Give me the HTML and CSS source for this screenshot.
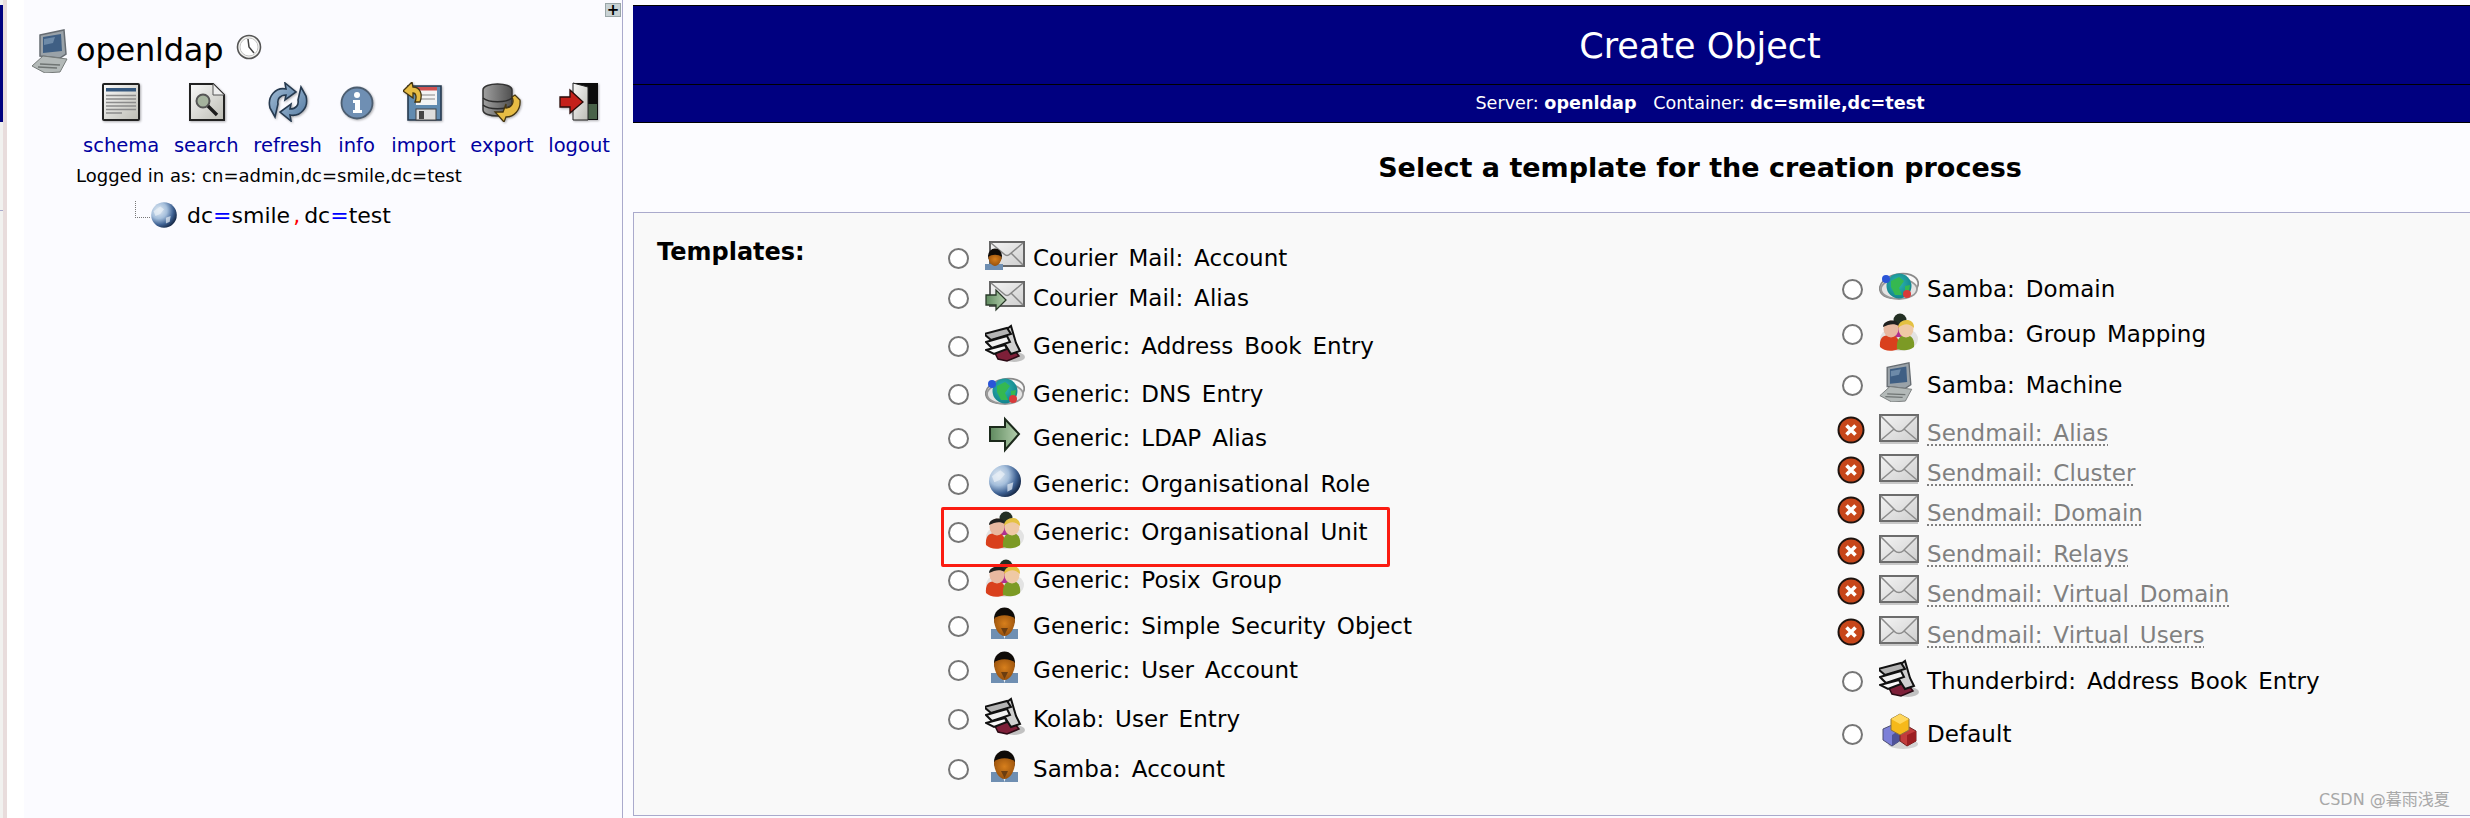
FILE: index.html
```html
<!DOCTYPE html>
<html lang="en">
<head>
<meta charset="utf-8">
<title>Create Object</title>
<link rel="stylesheet" href="styles.css">
</head>
<body>
<svg class="defs" width="0" height="0" aria-hidden="true">
  <defs>
    <radialGradient id="gGlobe" cx="30%" cy="32%" r="80%"><stop offset="0" stop-color="#e4ecf4"/><stop offset=".4" stop-color="#a4bedb"/><stop offset=".7" stop-color="#3f6294"/><stop offset="1" stop-color="#0c1a34"/></radialGradient>
    <radialGradient id="gEarth" cx="45%" cy="40%" r="65%"><stop offset="0" stop-color="#2fb8b0"/><stop offset="1" stop-color="#0f7f8a"/></radialGradient>
    <radialGradient id="gFace" cx="50%" cy="40%" r="60%"><stop offset="0" stop-color="#d77f1c"/><stop offset="1" stop-color="#97500c"/></radialGradient>
    <linearGradient id="gGrey" x1="0" y1="0" x2="1" y2="1"><stop offset="0" stop-color="#fafafa"/><stop offset="1" stop-color="#bcbcb4"/></linearGradient>
    <linearGradient id="gBlue" x1="0" y1="0" x2="1" y2="1"><stop offset="0" stop-color="#a8c2da"/><stop offset="1" stop-color="#4f769e"/></linearGradient>
    <linearGradient id="gDb" x1="0" y1="0" x2="1" y2="0"><stop offset="0" stop-color="#a0a0a0"/><stop offset="1" stop-color="#505050"/></linearGradient>
    <linearGradient id="gGreen" x1="0" y1="0" x2="1" y2="0"><stop offset="0" stop-color="#5f8a5f"/><stop offset="1" stop-color="#b5d0ae"/></linearGradient>
    <linearGradient id="gMail" x1="0" y1="0" x2="1" y2="1"><stop offset="0" stop-color="#f4f4f4"/><stop offset="1" stop-color="#cfcfcf"/></linearGradient>

    <symbol id="i-computer" viewBox="0 0 38 44" preserveAspectRatio="xMinYMid">
      <path d="M9 6 33 1 35 25 29 29 9 27Z" fill="#9aa2a8" stroke="#666c72" stroke-width="1.500"/>
      <path d="M12 8 30 5 31 22 12 24Z" fill="#3f5f84"/>
      <path d="M13 10 24 8 22 14 13 16Z" fill="#6d8aa8"/>
      <path d="M1 37 12 27 36 30 29 43 14 44Z" fill="#b3b9b8" stroke="#767b7a"/>
      <path d="M9 35 29 36M7 38 26 39" stroke="#6f7473" stroke-width="1.400"/>
    </symbol>

    <symbol id="i-clock" viewBox="0 0 26 28">
      <circle cx="13" cy="14" r="11.500" fill="#f3f3f0" stroke="#555" stroke-width="1.600"/>
      <circle cx="13" cy="14" r="9" fill="#fff" stroke="#c4c4c4"/>
      <path d="M12 6 13 14 18 20" fill="none" stroke="#444" stroke-width="1.500"/>
    </symbol>

    <symbol id="i-schema" viewBox="0 0 40 40">
      <rect x="2" y="2" width="36" height="36" rx="1" fill="url(#gGrey)" stroke="#222" stroke-width="2"/>
      <rect x="5" y="6" width="30" height="3.500" fill="#35587f"/>
      <path d="M5 13.500H35M5 17H35M5 20.500H35M5 24H35M5 27.500H35M5 31H21" stroke="#8b8b8b" stroke-width="1.700"/>
    </symbol>

    <symbol id="i-search" viewBox="0 0 40 40">
      <path d="M4 2H27L38 13V38H4Z" fill="url(#gGrey)" stroke="#222" stroke-width="2"/>
      <path d="M27 2V13H38" fill="#eee" stroke="#555"/>
      <circle cx="17" cy="19" r="6.500" fill="#a5b39e" stroke="#555" stroke-width="2"/>
      <path d="M22 24 31 33" stroke="#1c1c1c" stroke-width="3.400"/>
    </symbol>

    <symbol id="i-refresh" viewBox="0 0 40 40">
      <path d="M2 26C-1 14 8 5 18 7L17 1 28 10 17 18 18 13C12 13 9 17 10 22L7 35Z" fill="url(#gBlue)" stroke="#263a50" stroke-width="1.600"/>
      <path d="M38 14C41 26 32 35 22 33L23 39 12 30 23 22 22 27C28 27 31 23 30 18L33 5Z" fill="url(#gBlue)" stroke="#263a50" stroke-width="1.600"/>
    </symbol>

    <symbol id="i-info" viewBox="0 0 40 40">
      <circle cx="20" cy="21" r="15.500" fill="#6f8fb3" stroke="#4c5d70" stroke-width="1.800"/>
      <circle cx="20" cy="13" r="3" fill="#fff"/>
      <path d="M16 18H23V28H25V31H16V28H18V21H16Z" fill="#fff"/>
    </symbol>

    <symbol id="i-import" viewBox="0 0 40 40">
      <path d="M5 4H38V38H5Z" fill="#618bb0" stroke="#263a50" stroke-width="1.600"/>
      <rect x="13" y="5" width="21" height="18" fill="#f4f4f4"/>
      <rect x="13" y="5" width="21" height="3.500" fill="#cf5050"/>
      <path d="M15 13H32M15 17H32" stroke="#aaa" stroke-width="1.500"/>
      <rect x="13" y="27" width="20" height="11" fill="#ddd" stroke="#444"/>
      <rect x="16" y="29" width="5" height="8" fill="#444"/>
      <path d="M0 9 9 0 10 5C17 5 20 12 17 20L12 20C14 15 13 11 10 11L10 16Z" fill="#e7bc44" stroke="#453612" stroke-width="1.300"/>
    </symbol>

    <symbol id="i-export" viewBox="0 0 40 40">
      <path d="M1 8C1 0 30 0 30 8V28C30 36 1 36 1 28Z" fill="url(#gDb)" stroke="#333" stroke-width="1.500"/>
      <path d="M1 16C7 21 24 21 30 16M1 23C7 28 24 28 30 23" fill="none" stroke="#2c2c2c" stroke-width="1.500"/>
      <path d="M21 30 13 30 22 40 24 35C32 35 39 28 38 18L33 13 30 15C33 21 29 26 24 26L24 22Z" fill="#e7bc44" stroke="#453612" stroke-width="1.300"/>
    </symbol>

    <symbol id="i-logout" viewBox="0 0 40 40">
      <rect x="14" y="1" width="25" height="37" fill="#0c0c0c"/>
      <rect x="29" y="22" width="9" height="15" fill="#496249"/>
      <path d="M14 1 29 5V38H14Z" fill="url(#gGrey)" stroke="#222"/>
      <path d="M1 15H11V8L24 20 11 31V25H1Z" fill="#c4201a" stroke="#2a0a08" stroke-width="1.300"/>
    </symbol>

    <symbol id="i-globe" viewBox="-1.875 -1.875 33.750 33.750">
      <circle cx="15" cy="15" r="13.500" fill="url(#gGlobe)"/>
      <path d="M4 11 11 6 15 9 11 14 6 16ZM17 18 22 16 21 22 17 24Z" fill="#e8eff6" opacity=".7"/>
    </symbol>

    <symbol id="i-person" viewBox="0 0 40 40">
      <rect x="6" y="26" width="27" height="10" fill="#6f8fb2"/>
      <path d="M17.500 29H21.500L19.500 36Z" fill="#e8eef4"/>
      <ellipse cx="19.500" cy="16" rx="10.500" ry="11.500" fill="#0f0b08"/>
      <path d="M9 16C13 11 26 11 30 16 30 25 25 33 19.500 33 14 33 9 25 9 16Z" fill="url(#gFace)"/>
      <path d="M16 25H23L19.500 32Z" fill="#6b3d10"/>
    </symbol>

    <symbol id="i-people" viewBox="0 0 40 40">
      <ellipse cx="20" cy="28" rx="19" ry="12" fill="#bbb" opacity=".35"/>
      <circle cx="21" cy="9" r="6.500" fill="#243024"/>
      <rect x="16" y="14" width="9" height="12" fill="#b03090"/>
      <path d="M1 36C0 26 5 24 11 24 17 24 21 27 20 38 12 41 5 40 1 36Z" fill="#d9401d"/>
      <path d="M18 38C17 27 22 24 27 24 33 24 36 29 35 36 30 40 24 40 18 38Z" fill="#7c9a25"/>
      <ellipse cx="12" cy="18" rx="7.500" ry="8.500" fill="#e8b8a0"/>
      <path d="M4 16C4 8 20 7 20 15 15 12 10 13 4 16Z" fill="#20201f"/>
      <ellipse cx="27" cy="18" rx="7.500" ry="8.500" fill="#efc9a5"/>
      <path d="M19 17C19 7 36 6 35 17 30 12 25 12 19 17Z" fill="#e4c142"/>
    </symbol>

    <symbol id="i-book" viewBox="2 0 40 40">
      <ellipse cx="31" cy="34" rx="11" ry="5" fill="#aaa" opacity=".7"/>
      <path d="M12 30 28 23 36 33 24 38 15 36Z" fill="#7d1f38" stroke="#2a0a14" stroke-width="1.500"/>
      <path d="M16 12 28 3 33 20 37 28 28 31Z" fill="#d0d0d0" stroke="#111" stroke-width="2"/>
      <path d="M1 11 24 5 28 11 8 17Z" fill="#b4b4b4" stroke="#111" stroke-width="2"/>
      <path d="M3 19 24 13 27 19 9 25Z" fill="#f1f1f1" stroke="#111" stroke-width="2"/>
      <path d="M3 27 22 22 24 26 11 31Z" fill="#fafafa" stroke="#111" stroke-width="2"/>
    </symbol>

    <symbol id="i-dns" viewBox="0 0 40 40">
      <ellipse cx="20" cy="20" rx="19.500" ry="12" transform="rotate(-12 20 20)" fill="none" stroke="#8a8a8a" stroke-width="1.800"/>
      <ellipse cx="20" cy="23" rx="18" ry="10" fill="#e4e4e4" stroke="#999" stroke-width="1.800"/>
      <circle cx="20" cy="20" r="12.500" fill="url(#gEarth)"/>
      <path d="M12 15 20 11 25 15 20 22 23 29 16 29 12 21ZM26 20 31 19 30 25 26 26Z" fill="#35b850"/>
      <circle cx="7" cy="13" r="4" fill="#2a55d8"/>
      <circle cx="28" cy="28" r="4" fill="#d83a3a"/>
    </symbol>

    <symbol id="i-arrow" viewBox="0 0 40 40">
      <path d="M5 12H20V4L34 19 20 35V26H5Z" fill="url(#gGreen)" stroke="#1c2a1c" stroke-width="2"/>
    </symbol>

    <symbol id="i-mail" viewBox="0 0 40 40">
      <rect x="1" y="5" width="38" height="26" fill="url(#gMail)" stroke="#6c6c6c" stroke-width="2"/>
      <path d="M2 6 16 20C18 22 22 22 24 20L38 6M2 30 15 19M38 30 25 19" fill="none" stroke="#8c8c8c" stroke-width="1.500"/>
      <rect x="1" y="32" width="38" height="2" fill="#c8c8c8"/>
    </symbol>

    <symbol id="i-mailuser" viewBox="0 0 40 40">
      <rect x="5" y="7" width="34" height="24" fill="url(#gMail)" stroke="#666" stroke-width="2"/>
      <path d="M6 8 19 19C21 21 23 21 25 19L38 8M38 30 26 18" fill="none" stroke="#888" stroke-width="1.500"/>
      <rect x="0" y="29" width="18" height="6" fill="#6f8fb2"/>
      <ellipse cx="10" cy="21" rx="7" ry="7.500" fill="#0f0b08"/>
      <path d="M3.500 22C6 19 14 19 16.500 22 16.500 27 13 31 10 31 7 31 3.500 27 3.500 22Z" fill="url(#gFace)"/>
    </symbol>

    <symbol id="i-mailalias" viewBox="0 0 40 40">
      <rect x="5" y="7" width="34" height="24" fill="url(#gMail)" stroke="#666" stroke-width="2"/>
      <path d="M6 8 19 19C21 21 23 21 25 19L38 8M38 30 26 18" fill="none" stroke="#888" stroke-width="1.500"/>
      <path d="M1 20H11V15L21 25 11 35V30H1Z" fill="url(#gGreen)" stroke="#2a3a2a" stroke-width="1.300"/>
    </symbol>

    <symbol id="i-x" viewBox="0 0 28 28">
      <circle cx="14" cy="14" r="12.500" fill="#c7461a" stroke="#1e1410" stroke-width="2"/>
      <path d="M9.500 9.500 18.500 18.500M18.500 9.500 9.500 18.500" stroke="#fff" stroke-width="3.600"/>
    </symbol>

    <symbol id="i-cube" viewBox="0 0 40 40">
      <ellipse cx="24" cy="33" rx="15" ry="5" fill="#bbb" opacity=".6"/>
      <path d="M4 18 13 14 22 18V29L13 35 4 29Z" fill="#7c80d8" stroke="#4c4e70"/>
      <path d="M13 24V35L22 29V18Z" fill="#4f5298"/>
      <path d="M21 20 30 16 37 20V30L28 35 21 30Z" fill="#c23c3c" stroke="#702222"/>
      <path d="M28 24V35L37 30V20Z" fill="#9c1f22"/>
      <path d="M12 8 21 3 30 8V19L21 24 12 19Z" fill="#f6b91a" stroke="#8c7440"/>
      <path d="M12 8 21 13 30 8 21 3Z" fill="#ffd75c"/>
    </symbol>
  </defs>
</svg>

<div class="edge">
  <div class="edge-bar"></div>
  <div class="edge-line"></div>
</div>
<div class="edge-pink"></div>

<aside class="side">
  <button class="expand" type="button">+</button>
  <div class="server">
    <svg class="ico server-ico"><use href="#i-computer"/></svg>
    <span class="server-name">openldap</span>
    <svg class="ico clock-ico"><use href="#i-clock"/></svg>
  </div>
  <nav class="tools">
    <a class="tool"><svg class="ico"><use href="#i-schema"/></svg><span>schema</span></a>
    <a class="tool"><svg class="ico"><use href="#i-search"/></svg><span>search</span></a>
    <a class="tool"><svg class="ico"><use href="#i-refresh"/></svg><span>refresh</span></a>
    <a class="tool"><svg class="ico"><use href="#i-info"/></svg><span>info</span></a>
    <a class="tool"><svg class="ico"><use href="#i-import"/></svg><span>import</span></a>
    <a class="tool"><svg class="ico"><use href="#i-export"/></svg><span>export</span></a>
    <a class="tool"><svg class="ico"><use href="#i-logout"/></svg><span>logout</span></a>
  </nav>
  <p class="logged">Logged in as: cn=admin,dc=smile,dc=test</p>
  <div class="tree">
    <span class="branch"></span>
    <svg class="ico tree-ico"><use href="#i-globe"/></svg>
    <span class="dn">dc<b class="eq">=</b>smile<b class="comma">,</b>dc<b class="eq">=</b>test</span>
  </div>
</aside>

<main class="main">
  <header class="head">
    <h1 class="title">Create Object</h1>
    <p class="sub">Server: <b>openldap</b> <span class="sub-gap">Container:</span> <b>dc=smile,dc=test</b></p>
  </header>
  <h2 class="prompt">Select a template for the creation process</h2>
  <section class="panel">
    <div class="label">Templates:</div>
    <div class="col col-left">
      <label class="row"><input type="radio" name="t"><svg class="ico tpl"><use href="#i-mailuser"/></svg><span class="name">Courier Mail: Account</span></label>
      <label class="row"><input type="radio" name="t"><svg class="ico tpl"><use href="#i-mailalias"/></svg><span class="name">Courier Mail: Alias</span></label>
      <label class="row g8"><input type="radio" name="t"><svg class="ico tpl"><use href="#i-book"/></svg><span class="name">Generic: Address Book Entry</span></label>
      <label class="row g8"><input type="radio" name="t"><svg class="ico tpl"><use href="#i-dns"/></svg><span class="name">Generic: DNS Entry</span></label>
      <label class="row g4"><input type="radio" name="t"><svg class="ico tpl"><use href="#i-arrow"/></svg><span class="name">Generic: LDAP Alias</span></label>
      <label class="row g6"><input type="radio" name="t"><svg class="ico tpl"><use href="#i-globe"/></svg><span class="name">Generic: Organisational Role</span></label>
      <label class="row g8"><input type="radio" name="t"><svg class="ico tpl"><use href="#i-people"/></svg><span class="name">Generic: Organisational Unit</span></label>
      <label class="row g8"><input type="radio" name="t"><svg class="ico tpl"><use href="#i-people"/></svg><span class="name">Generic: Posix Group</span></label>
      <label class="row g6"><input type="radio" name="t"><svg class="ico tpl"><use href="#i-person"/></svg><span class="name">Generic: Simple Security Object</span></label>
      <label class="row g4"><input type="radio" name="t"><svg class="ico tpl"><use href="#i-person"/></svg><span class="name">Generic: User Account</span></label>
      <label class="row g9"><input type="radio" name="t"><svg class="ico tpl"><use href="#i-book"/></svg><span class="name">Kolab: User Entry</span></label>
      <label class="row g10"><input type="radio" name="t"><svg class="ico tpl"><use href="#i-person"/></svg><span class="name">Samba: Account</span></label>
    </div>
    <div class="col col-right">
      <label class="row"><input type="radio" name="t"><svg class="ico tpl"><use href="#i-dns"/></svg><span class="name">Samba: Domain</span></label>
      <label class="row g5"><input type="radio" name="t"><svg class="ico tpl"><use href="#i-people"/></svg><span class="name">Samba: Group Mapping</span></label>
      <label class="row g11"><input type="radio" name="t"><svg class="ico tpl"><use href="#i-computer"/></svg><span class="name">Samba: Machine</span></label>
      <div class="row off g5"><svg class="ico no"><use href="#i-x"/></svg><svg class="ico tpl"><use href="#i-mail"/></svg><span class="name">Sendmail: Alias</span></div>
      <div class="row off"><svg class="ico no"><use href="#i-x"/></svg><svg class="ico tpl"><use href="#i-mail"/></svg><span class="name">Sendmail: Cluster</span></div>
      <div class="row off"><svg class="ico no"><use href="#i-x"/></svg><svg class="ico tpl"><use href="#i-mail"/></svg><span class="name">Sendmail: Domain</span></div>
      <div class="row off g1"><svg class="ico no"><use href="#i-x"/></svg><svg class="ico tpl"><use href="#i-mail"/></svg><span class="name">Sendmail: Relays</span></div>
      <div class="row off"><svg class="ico no"><use href="#i-x"/></svg><svg class="ico tpl"><use href="#i-mail"/></svg><span class="name">Sendmail: Virtual Domain</span></div>
      <div class="row off g1"><svg class="ico no"><use href="#i-x"/></svg><svg class="ico tpl"><use href="#i-mail"/></svg><span class="name">Sendmail: Virtual Users</span></div>
      <label class="row g9"><input type="radio" name="t"><svg class="ico tpl"><use href="#i-book"/></svg><span class="name">Thunderbird: Address Book Entry</span></label>
      <label class="row g13"><input type="radio" name="t"><svg class="ico tpl"><use href="#i-cube"/></svg><span class="name">Default</span></label>
    </div>
  </section>
</main>

<div class="callout"></div>
<div class="watermark">CSDN @暮雨浅夏</div>
</body>
</html>
```

FILE: styles.css
```css
* { box-sizing: border-box; }
html, body { margin: 0; height: 818px; overflow: hidden; }
body {
  display: flex;
  position: relative;
  background: #fff;
  color: #000;
  font-family: "DejaVu Sans", Verdana, sans-serif;
}
.defs { position: absolute; }
.ico { display: block; flex: none; overflow: visible; filter: blur(.45px); }

/* slivers of the window behind */
.edge { width: 3px; flex: none; background: #f1f1ef; padding-top: 5px; }
.edge-bar { height: 117px; background: #000080; }
.edge-line { height: 1px; margin-top: 88px; background: #aaaacc; }
.edge-pink { width: 4px; flex: none; background: #e8dcdc; margin-right: 17px; }

/* tree frame */
.side {
  position: relative;
  width: 599px;
  flex: none;
  padding: 29px 0 0 7px;
  background: #fbfbff;
  border-right: 1px solid #aaaacc;
}
.expand {
  position: absolute;
  top: 3px;
  right: 1px;
  width: 16px;
  height: 14px;
  padding: 0;
  border: 1px solid #9aa6a8;
  background: #c8d2d4;
  color: #000;
  font: bold 15px/11px "DejaVu Sans", sans-serif;
}
.server { display: flex; align-items: center; height: 43px; }
.server-ico { width: 38px; height: 44px; margin-right: 7px; }
.server-name { font-size: 32px; letter-spacing: -.2px; line-height: 43px; }
.clock-ico { width: 26px; height: 28px; margin: -8px 0 0 13px; }
.tools { display: flex; gap: 14.700px; margin: 10px 0 0 52px; }
.tool { display: flex; flex-direction: column; align-items: center; color: #0000a0; font-size: 19.500px; line-height: 24px; }
.tool svg { width: 40px; height: 40px; margin-bottom: 12px; filter: blur(.35px) drop-shadow(1px 1px 1px rgba(0, 0, 0, .3)); }
.logged { margin: 6px 0 0 45px; font-size: 18px; line-height: 24px; }
.tree { display: flex; align-items: flex-start; margin: 13px 0 0 104px; }
.branch { width: 15px; height: 17px; margin-top: 0; border-left: 1px dotted #777; border-bottom: 1px dotted #777; }
.tree-ico { width: 32px; height: 32px; margin: -2px 7px 0 -2px; }
.dn { font-size: 22px; line-height: 30px; }
.dn b { font-weight: normal; }
.eq { color: #0000ff; }
.comma { color: #ff0000; margin: 0 4px 0 3px; }

.main { flex: 1; min-width: 0; padding: 5px 0 0 10px; background: #fcfcff; }
.head { background: #000080; color: #fff; text-align: center; height: 118px; border-top: 1px solid #000; border-bottom: 1px solid #000; }
.title { margin: 0; height: 79px; padding-left: 297px; border-bottom: 1px solid #000; font-size: 35px; font-weight: normal; line-height: 80px; }
.sub { margin: 0; padding-left: 297px; font-size: 17.600px; line-height: 37px; }
.sub-gap { margin-left: 11px; }
.prompt { margin: 0; height: 89px; padding-left: 297px; text-align: center; font-size: 27px; font-weight: bold; line-height: 90px; }
.panel {
  display: flex;
  height: 604px;
  background: #f9f9f9;
  border: 1px solid #aaaacc;
  border-right: 0;
}
.label { width: 314px; flex: none; padding: 24px 0 0 23px; font-size: 24px; font-weight: bold; line-height: 30px; }
.col { flex: none; }
.col-left { width: 894px; padding-top: 25px; }
.col-right { width: 628px; padding-top: 56px; }

.row { display: flex; align-items: center; height: 40px; font-size: 23px; }
.row input {
  appearance: none;
  flex: none;
  width: 21px;
  height: 21px;
  margin: 0 16px 0 0;
  background: #fff;
  border: 2px solid #767676;
  border-radius: 50%;
}
.tpl { width: 40px; height: 40px; margin: -6px 8px 0 0; }
.name { line-height: 30px; letter-spacing: .06px; word-spacing: 3.500px; white-space: nowrap; }
.off .tpl { margin-top: 0; }
.off .name { color: #808080; padding-top: 6px; text-decoration: underline dotted #808080 2px; text-underline-offset: 3px; }
.no { width: 28px; height: 28px; margin: 0 14px 0 -5px; }
.g1 { margin-top: 1px; }
.g4 { margin-top: 4px; }
.g5 { margin-top: 5px; }
.g6 { margin-top: 6px; }
.g8 { margin-top: 8px; }
.g9 { margin-top: 9px; }
.g10 { margin-top: 10px; }
.g11 { margin-top: 11px; }
.g13 { margin-top: 13px; }

/* annotation drawn over the screenshot */
.callout { position: absolute; left: 941px; top: 507px; width: 449px; height: 60px; border: 3px solid #fb1c12; border-radius: 2px; }
.watermark { position: absolute; left: 2319px; top: 789px; font: 16px/22px "DejaVu Sans", "Noto Sans CJK SC", sans-serif; color: #a8a8a8; white-space: nowrap; }
```
